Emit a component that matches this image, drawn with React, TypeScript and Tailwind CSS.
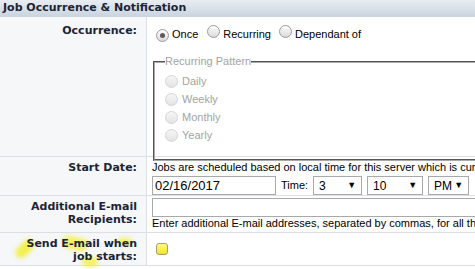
import React from "react";

const labelFont = { fontFamily: '"DejaVu Sans", Verdana, sans-serif' };

function Radio({ checked, disabled }: { checked?: boolean; disabled?: boolean }) {
  return (
    <span
      className={
        "inline-flex items-center justify-center w-[13px] h-[13px] rounded-full border shrink-0 " +
        (disabled
          ? "border-[#d4d4d4] bg-gradient-to-b from-[#f6f6f6] to-[#e4e4e4]"
          : "border-[#9c9c9c] bg-gradient-to-b from-white to-[#dadada]")
      }
    >
      {checked && <span className="w-[5px] h-[5px] rounded-full bg-[#5a5a5a]" />}
    </span>
  );
}

function Select({ value, w }: { value: string; w: string }) {
  return (
    <div
      className={
        "flex items-center justify-between h-[19px] border border-[#a9a9a9] bg-white pl-[5px] pr-[5px] text-[12px] text-black " +
        w
      }
    >
      <span>{value}</span>
      <span className="text-[9px] leading-none">▼</span>
    </div>
  );
}

// One row of the settings table: label on the left, content on the right
function Row({
  label,
  h,
  labelPad = "pt-[4px]",
  children,
  extra,
}: {
  label: React.ReactNode;
  h: string;
  labelPad?: string;
  children: React.ReactNode;
  extra?: React.ReactNode;
}) {
  return (
    <div className={"flex border-b border-[#dcdfe3] " + h}>
      <div
        className={
          "relative w-[147px] shrink-0 border-r border-[#dcdfe3] bg-[#f5f7f9] text-right pr-[9px] text-[11px] leading-[13px] font-bold text-[#1c2436] " +
          labelPad
        }
        style={labelFont}
      >
        {label}
        {extra}
      </div>
      <div className="flex-1 pl-[5px] min-w-0">{children}</div>
    </div>
  );
}

export default function App() {
  return (
    <div className="w-[475px] h-[269px] overflow-hidden bg-white">
      <div className="w-[720px]" style={{ fontFamily: '"Liberation Sans", Arial, sans-serif' }}>
        {/* Section header */}
        <div
          className="h-[17px] pl-[3px] flex items-center bg-gradient-to-b from-[#e8edf2] to-[#c9d4df] text-[11px] font-bold text-[#1b2434]"
          style={labelFont}
        >
          Job Occurrence &amp; Notification
        </div>

        {/* Occurrence */}
        <Row label="Occurrence:" h="h-[140px]" labelPad="pt-[7px]">
          <div className="pt-[8px] flex items-center h-[26px] text-[11px] text-black">
            <span className="ml-[4px]">
              <Radio checked />
            </span>
            <span className="ml-[3px]">Once</span>
            <span className="ml-[9px]">
              <Radio />
            </span>
            <span className="ml-[3px]">Recurring</span>
            <span className="ml-[8px]">
              <Radio />
            </span>
            <span className="ml-[3px]">Dependant of</span>
          </div>
          <fieldset className="mt-[12px] ml-[1px] w-[520px] border-2 [border-style:groove] border-[#a8a8a8] px-[10px] pb-[15px]">
            <legend className="px-[0px] text-[11px] leading-[13px] text-[#a3a3a3]">Recurring Pattern</legend>
            <div className="pt-[4px] text-[11px] text-[#a3a3a3]">
              {["Daily", "Weekly", "Monthly", "Yearly"].map((d) => (
                <div key={d} className="flex items-center h-[18px] gap-[4px]">
                  <Radio disabled />
                  <span>{d}</span>
                </div>
              ))}
            </div>
          </fieldset>
        </Row>

        {/* Start date */}
        <Row label="Start Date:" h="h-[39px]">
          <div className="pt-[4px] text-[11px] leading-[13px] text-black whitespace-nowrap">
            Jobs are scheduled based on local time for this server which is currently (GMT-05:00) Eastern Time (US &amp; Canada).
          </div>
          <div className="flex items-center mt-[2px] text-[11px] text-black">
            <div className="w-[124px] h-[19px] border border-[#a9a9a9] pl-[2px] flex items-center text-[13px]">
              02/16/2017
            </div>
            <span className="ml-[5px] mr-[5px]">Time:</span>
            <Select value="3" w="w-[49px]" />
            <span className="w-[5px]" />
            <Select value="10" w="w-[56px]" />
            <span className="w-[5px]" />
            <Select value="PM" w="w-[41px]" />
          </div>
        </Row>

        {/* Additional recipients */}
        <Row
          label={
            <>
              Additional E-mail
              <br />
              Recipients:
            </>
          }
          h="h-[37px]"
        >
          <div className="mt-[2px] w-[540px] h-[19px] border border-[#a9a9a9]" />
          <div className="text-[11px] leading-[13px] text-black whitespace-nowrap">
            Enter additional E-mail addresses, separated by commas, for all the users who should receive notifications.
          </div>
        </Row>

        {/* Send email */}
        <Row
          label={
            <span className="relative z-10">
              Send E-mail when
              <br />
              job starts:
            </span>
          }
          h="h-[33px]"
          extra={
            <>
              <span className="absolute left-[14px] top-[10px] w-[22px] h-[11px] rounded-full bg-[#f3ee00]/70 blur-[2px] -rotate-45 z-0" />
              <span className="absolute left-[62px] top-[4px] w-[26px] h-[13px] rounded-full bg-[#f3ee00]/60 blur-[2px] rotate-12 z-0" />
              <span className="absolute left-[82px] top-[24px] w-[16px] h-[10px] rounded-full bg-[#f3ee00]/60 blur-[2px] z-0" />
              <span className="absolute left-[118px] top-[5px] w-[14px] h-[8px] rounded-full bg-[#f3ee00]/60 blur-[2px] z-0" />
            </>
          }
        >
          <div className="pt-[10px] pl-[4px]">
            <div className="w-[12px] h-[12px] rounded-[3px] border border-[#a3a070] bg-gradient-to-b from-[#fffb80] to-[#f2e400]" />
          </div>
        </Row>
      </div>
    </div>
  );
}
